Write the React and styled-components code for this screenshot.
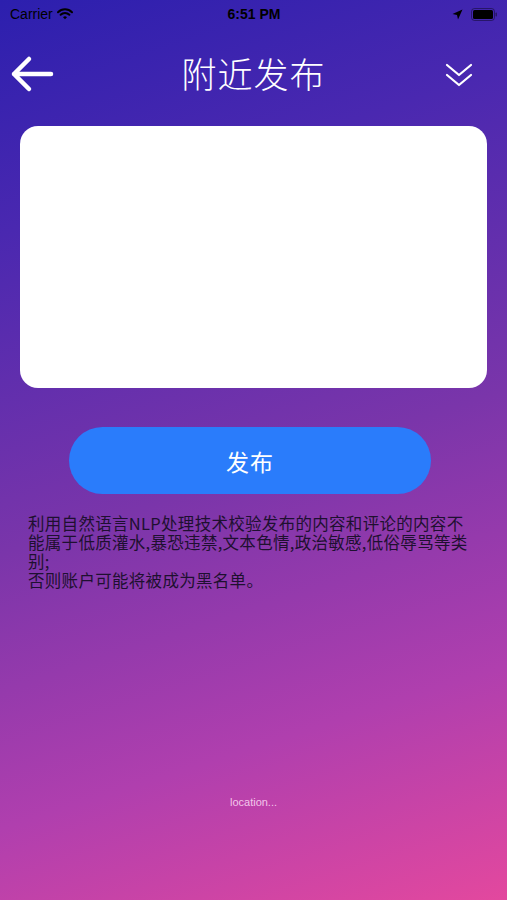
import styled, { createGlobalStyle } from "styled-components";

const GlobalStyle = createGlobalStyle`
  html, body {
    margin: 0;
    padding: 0;
  }
  body {
    font-family: "Noto Sans CJK SC", "Noto Sans", sans-serif;
  }
`;

const Screen = styled.div`
  width: 507px;
  height: 900px;
  display: flex;
  flex-direction: column;
  background: linear-gradient(162deg, #2c1fae 0%, #4a28b0 22%, #7a35aa 52%, #b03fae 78%, #e3489e 100%);
  overflow: hidden;
`;

const StatusBar = styled.div`
  height: 28px;
  display: grid;
  grid-template-columns: 1fr auto 1fr;
  align-items: center;
  padding: 0 9px 0 10px;
  font-family: "Liberation Sans", Arial, sans-serif;
  font-size: 14px;
  color: #000;
`;

const StatusLeft = styled.div`
  display: flex;
  align-items: center;
  gap: 4px;
`;

const StatusTime = styled.div`
  font-weight: bold;
  font-size: 14px;
`;

const StatusRight = styled.div`
  display: flex;
  justify-content: flex-end;
  align-items: center;
  gap: 8px;
`;

const NavBar = styled.div`
  height: 90px;
  display: grid;
  grid-template-columns: 80px 1fr 80px;
  align-items: center;
`;

const BackButton = styled.div`
  display: flex;
  align-items: center;
  padding: 2px 0 0 10px;
`;

const Title = styled.div`
  text-align: center;
  color: #fff;
  font-size: 35px;
  font-weight: 300;
  letter-spacing: 1px;
  margin-top: -2px;
`;

const MenuButton = styled.div`
  display: flex;
  justify-content: flex-end;
  padding: 4px 34px 0 0;
`;

const Content = styled.div`
  display: flex;
  flex-direction: column;
  padding: 8px 20px 0;
`;

const Editor = styled.textarea`
  height: 262px;
  border: none;
  border-radius: 18px;
  background: #fff;
  resize: none;
  outline: none;
  padding: 12px;
  font-size: 16px;
  box-sizing: border-box;
`;

const SubmitButton = styled.button`
  align-self: flex-start;
  margin: 39px 0 0 49px;
  width: 362px;
  height: 67px;
  border: none;
  border-radius: 34px;
  background: #2a7cfb;
  color: #fff;
  font-family: "Noto Sans CJK SC", sans-serif;
  font-size: 23px;
  letter-spacing: 1px;
`;

const Notice = styled.p`
  margin: 20px 0 0 8px;
  font-size: 16.5px;
  letter-spacing: 0.3px;
  line-height: 19px;
  white-space: nowrap;
  color: #1e1030;
`;

const Location = styled.div`
  margin-top: auto;
  margin-bottom: 92px;
  text-align: center;
  color: #f3c6ea;
  font-family: "Liberation Sans", Arial, sans-serif;
  font-size: 11px;
`;

export default function App() {
  return (
    <>
      <GlobalStyle />
      <Screen>
        <StatusBar>
          <StatusLeft>
            <span>Carrier</span>
            <svg width="16" height="12" viewBox="0 0 16 12">
              <path d="M1 4.2a10 10 0 0 1 14 0" stroke="#000" strokeWidth="2" fill="none" strokeLinecap="round" />
              <path d="M3.6 6.8a6.3 6.3 0 0 1 8.8 0" stroke="#000" strokeWidth="2" fill="none" strokeLinecap="round" />
              <path d="M6 9.3l2 2 2-2a2.8 2.8 0 0 0-4 0z" fill="#000" />
            </svg>
          </StatusLeft>
          <StatusTime>6:51 PM</StatusTime>
          <StatusRight>
            <svg width="11" height="11" viewBox="0 0 11 11">
              <path d="M10.5 0.5L0.5 5l4.5 1 1 4.5z" fill="#000" />
            </svg>
            <svg width="27" height="13" viewBox="0 0 27 13">
              <rect x="0.5" y="0.5" width="23" height="12" rx="3" fill="none" stroke="#000" strokeOpacity="0.4" />
              <rect x="2" y="2" width="20" height="9" rx="1.5" fill="#000" />
              <rect x="24.5" y="4.5" width="1.5" height="4" rx="0.7" fill="#000" fillOpacity="0.4" />
            </svg>
          </StatusRight>
        </StatusBar>
        <NavBar>
          <BackButton>
            <svg width="44" height="38" viewBox="0 0 44 38">
              <path d="M41 19H4M19 4L4 19l15 15" stroke="#fff" strokeWidth="4.5" fill="none" strokeLinecap="round" strokeLinejoin="round" />
            </svg>
          </BackButton>
          <Title>附近发布</Title>
          <MenuButton>
            <svg width="28" height="26" viewBox="0 0 28 26">
              <path d="M2 3l12 10 12-10M2 13l12 10 12-10" stroke="#fff" strokeWidth="2.2" fill="none" strokeLinecap="round" strokeLinejoin="round" />
            </svg>
          </MenuButton>
        </NavBar>
        <Content>
          <Editor />
          <SubmitButton>发布</SubmitButton>
          <Notice>
            利用自然语言NLP处理技术校验发布的内容和评论的内容不
            <br />
            能属于低质灌水,暴恐违禁,文本色情,政治敏感,低俗辱骂等类
            <br />
            别;
            <br />
            否则账户可能将被成为黑名单。
          </Notice>
        </Content>
        <Location>location...</Location>
      </Screen>
    </>
  );
}
